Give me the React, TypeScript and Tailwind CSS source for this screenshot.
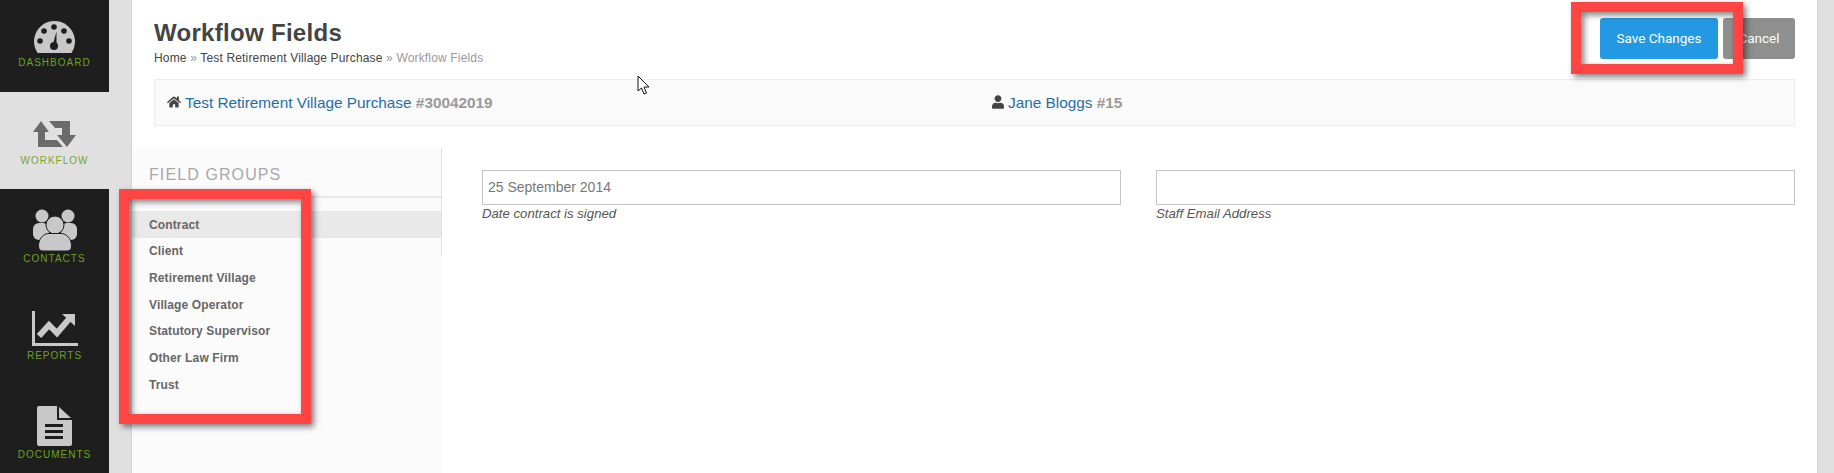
import { ReactNode } from "react";
import { FaHome, FaUser } from "react-icons/fa";

const GREY = "#c8c8c8";

function DashboardIcon() {
  return (
    <svg width="41" height="32" viewBox="0 0 41 32">
      <path d="M3.5 32 A20.5 20.5 0 1 1 37.5 32 Z" fill={GREY} />
      <circle cx="6" cy="20" r="2.8" fill="#1e1e1e" />
      <circle cx="10" cy="10" r="2.8" fill="#1e1e1e" />
      <circle cx="20" cy="6" r="2.8" fill="#1e1e1e" />
      <circle cx="30" cy="10" r="2.8" fill="#1e1e1e" />
      <circle cx="35" cy="20" r="2.8" fill="#1e1e1e" />
      <circle cx="20" cy="25" r="4" fill="#1e1e1e" />
      <path d="M19 23 L22.5 10.5 L22.5 24 Z" fill="#1e1e1e" />
    </svg>
  );
}

function WorkflowIcon() {
  return (
    <svg width="43" height="26" viewBox="0 0 43 26" fill="#6b6b6b">
      <path d="M8 0 L16 11 H12 V19 H24 L30 26 H5 V11 H0 Z" />
      <path d="M16 0 H37 V14 H43 L34 26 L24 14 H29 V7 H22 Z" />
    </svg>
  );
}

function ContactsIcon() {
  return (
    <svg width="44" height="42" viewBox="0 0 44 42" fill={GREY}>
      <circle cx="9" cy="7" r="6.5" />
      <circle cx="35" cy="7" r="6.5" />
      <rect x="0" y="14" width="16" height="17" rx="6" />
      <rect x="28" y="14" width="16" height="17" rx="6" />
      <circle cx="22" cy="16" r="9" stroke="#1e1e1e" strokeWidth="1" />
      <path
        d="M5.5 37 C5.5 29 11 24.5 16 24.5 H28 C33 24.5 38.5 29 38.5 37 Q38.5 42 34 42 H10 Q5.5 42 5.5 37 Z"
        stroke="#1e1e1e"
        strokeWidth="1"
      />
    </svg>
  );
}

function ReportsIcon() {
  return (
    <svg width="46" height="35" viewBox="0 0 46 35" fill={GREY}>
      <path d="M0 0 H3 V32 H46 V35 H0 Z" />
      <path d="M7 25 L17 14 L25 22 L37 8" fill="none" stroke={GREY} strokeWidth="6" />
      <path d="M30 3 L43 3 L43 15 Z" />
    </svg>
  );
}

function DocumentsIcon() {
  return (
    <svg width="35" height="40" viewBox="0 0 35 40" fill={GREY}>
      <path d="M2 0 H20 V14 H35 V38 Q35 40 33 40 H2 Q0 40 0 38 V2 Q0 0 2 0 Z" />
      <path d="M22 1 L34 12 H22 Z" />
      <rect x="8" y="18" width="18" height="3" fill="#1e1e1e" />
      <rect x="8" y="24" width="18" height="3" fill="#1e1e1e" />
      <rect x="8" y="30" width="18" height="3" fill="#1e1e1e" />
    </svg>
  );
}

function NavItem({
  icon,
  label,
  active,
  className,
  labelClass = "mt-[4px]",
}: {
  icon: ReactNode;
  label: string;
  active?: boolean;
  className: string;
  labelClass?: string;
}) {
  return (
    <div
      className={`flex flex-col items-center shrink-0 ${active ? "bg-[#e0e0e0]" : ""} ${className}`}
    >
      {icon}
      <span
        className={`text-[10px] leading-[12px] tracking-[1px] ${labelClass} ${
          active ? "text-[#7ba52f]" : "text-[#6aa31c]"
        }`}
      >
        {label}
      </span>
    </div>
  );
}

const GROUPS = [
  "Client",
  "Retirement Village",
  "Village Operator",
  "Statutory Supervisor",
  "Other Law Firm",
  "Trust",
];

function Field({ value, label }: { value: string; label: string }) {
  return (
    <div className="flex-1">
      <div className="h-[35px] border border-[#c4c4c4] px-[5px] flex items-center text-[14px] text-[#777]">
        {value}
      </div>
      <div className="text-[13.2px] leading-[18px] italic text-[#555]">{label}</div>
    </div>
  );
}

export default function App() {
  return (
    <div className="relative flex w-[1834px] h-[473px] overflow-hidden bg-[#e0e0e0] font-['Liberation_Sans',Arial,sans-serif]">
      <aside className="w-[109px] shrink-0 bg-[#1e1e1e] flex flex-col">
        <NavItem icon={<DashboardIcon />} label="DASHBOARD" className="h-[92px] pt-[21px]" />
        <NavItem
          icon={<WorkflowIcon />}
          label="WORKFLOW"
          active
          className="h-[97px] pt-[29px]"
          labelClass="mt-[8px]"
        />
        <NavItem
          icon={<ContactsIcon />}
          label="CONTACTS"
          className="h-[97px] pt-[20px]"
          labelClass="mt-[2px]"
        />
        <NavItem icon={<ReportsIcon />} label="REPORTS" className="h-[97px] pt-[25px]" />
        <NavItem
          icon={<DocumentsIcon />}
          label="DOCUMENTS"
          className="h-[90px] pt-[23px]"
          labelClass="mt-[3px]"
        />
      </aside>

      <main className="ml-[22px] w-[1687px] shrink-0 bg-white border-l border-r border-[#d4d4d4] flex flex-col">
        <header className="pl-[22px] pr-[22px] flex justify-between h-[79px]">
          <div>
            <h1 className="mt-[18px] text-[24px] leading-[30px] font-bold tracking-[0.3px] text-[#444]">
              Workflow Fields
            </h1>
            <div className="mt-[2px] text-[12px] leading-[16px] tracking-[0.16px] text-[#444]">
              Home <span className="text-[#999]">»</span> Test Retirement Village Purchase{" "}
              <span className="text-[#999]">» Workflow Fields</span>
            </div>
          </div>
          <div className="mt-[18px] flex gap-[5px] h-[41px] font-['Roboto',sans-serif] text-[13.5px] text-white">
            <button className="w-[118px] rounded-[3px] bg-[#2499e3]">Save Changes</button>
            <button className="w-[72px] rounded-[3px] bg-[#8f8f8f]">Cancel</button>
          </div>
        </header>

        <div className="mx-[22px] h-[47px] shrink-0 flex items-center border border-[#ececec] bg-[#fafafa] text-[15.35px]">
          <div className="w-[837px] pl-[12px] flex items-center gap-[4px]">
            <FaHome className="w-[14px] h-[14px] text-[#444]" />
            <span>
              <span className="text-[#1f6fa6]">Test Retirement Village Purchase</span>{" "}
              <span className="font-bold text-[#999]">#30042019</span>
            </span>
          </div>
          <div className="flex items-center gap-[4px]">
            <FaUser className="w-[12px] h-[14px] text-[#444]" />
            <span>
              <span className="text-[#1f6fa6]">Jane Bloggs</span>{" "}
              <span className="font-bold text-[#999]">#15</span>
            </span>
          </div>
        </div>

        <div className="mt-[21px] flex-1 flex">
          <div className="w-[310px] shrink-0 bg-[#fbfbfb]">
            <div className="h-[108px] border-r border-[#e2e2e2]">
              <div className="h-[51px] border-b-2 border-[#e8e8e8] pl-[17px] pt-[16px] text-[16px] leading-[24px] tracking-[1.1px] text-[#a8a8a8]">
                FIELD GROUPS
              </div>
              <div className="mt-[13px] h-[27px] bg-[#e9e9e9] pl-[17px] flex items-center text-[12px] font-bold tracking-[0.13px] text-[#666]">
                Contract
              </div>
              <ul>
                {GROUPS.map((name) => (
                  <li
                    key={name}
                    className="h-[26.7px] pl-[17px] flex items-center text-[12px] font-bold tracking-[0.13px] text-[#666]"
                  >
                    {name}
                  </li>
                ))}
              </ul>
            </div>
          </div>
          <div className="flex-1 flex gap-[35px] pl-[40px] pr-[22px] pt-[23px]">
            <Field value="25 September 2014" label="Date contract is signed" />
            <Field value="" label="Staff Email Address" />
          </div>
        </div>
      </main>

      {/* annotations drawn over the screenshot */}
      <div className="absolute left-[119px] top-[189px] w-[192px] h-[235px] border-[10px] border-[#ff4444] shadow-[3px_3px_6px_rgba(0,0,0,0.5),inset_3px_3px_6px_rgba(0,0,0,0.5)]" />
      <div className="absolute left-[1571px] top-[2px] w-[172px] h-[72px] border-[10px] border-[#ff4444] shadow-[3px_3px_6px_rgba(0,0,0,0.5),inset_3px_3px_6px_rgba(0,0,0,0.5)]" />

      <svg className="absolute left-[637px] top-[75px]" width="14" height="20" viewBox="0 0 14 20">
        <path
          d="M1 1 V16 L4.5 13 L7 19 L9.5 18 L7 12 H12 Z"
          fill="#fff"
          stroke="#111"
          strokeWidth="1"
        />
      </svg>
    </div>
  );
}
